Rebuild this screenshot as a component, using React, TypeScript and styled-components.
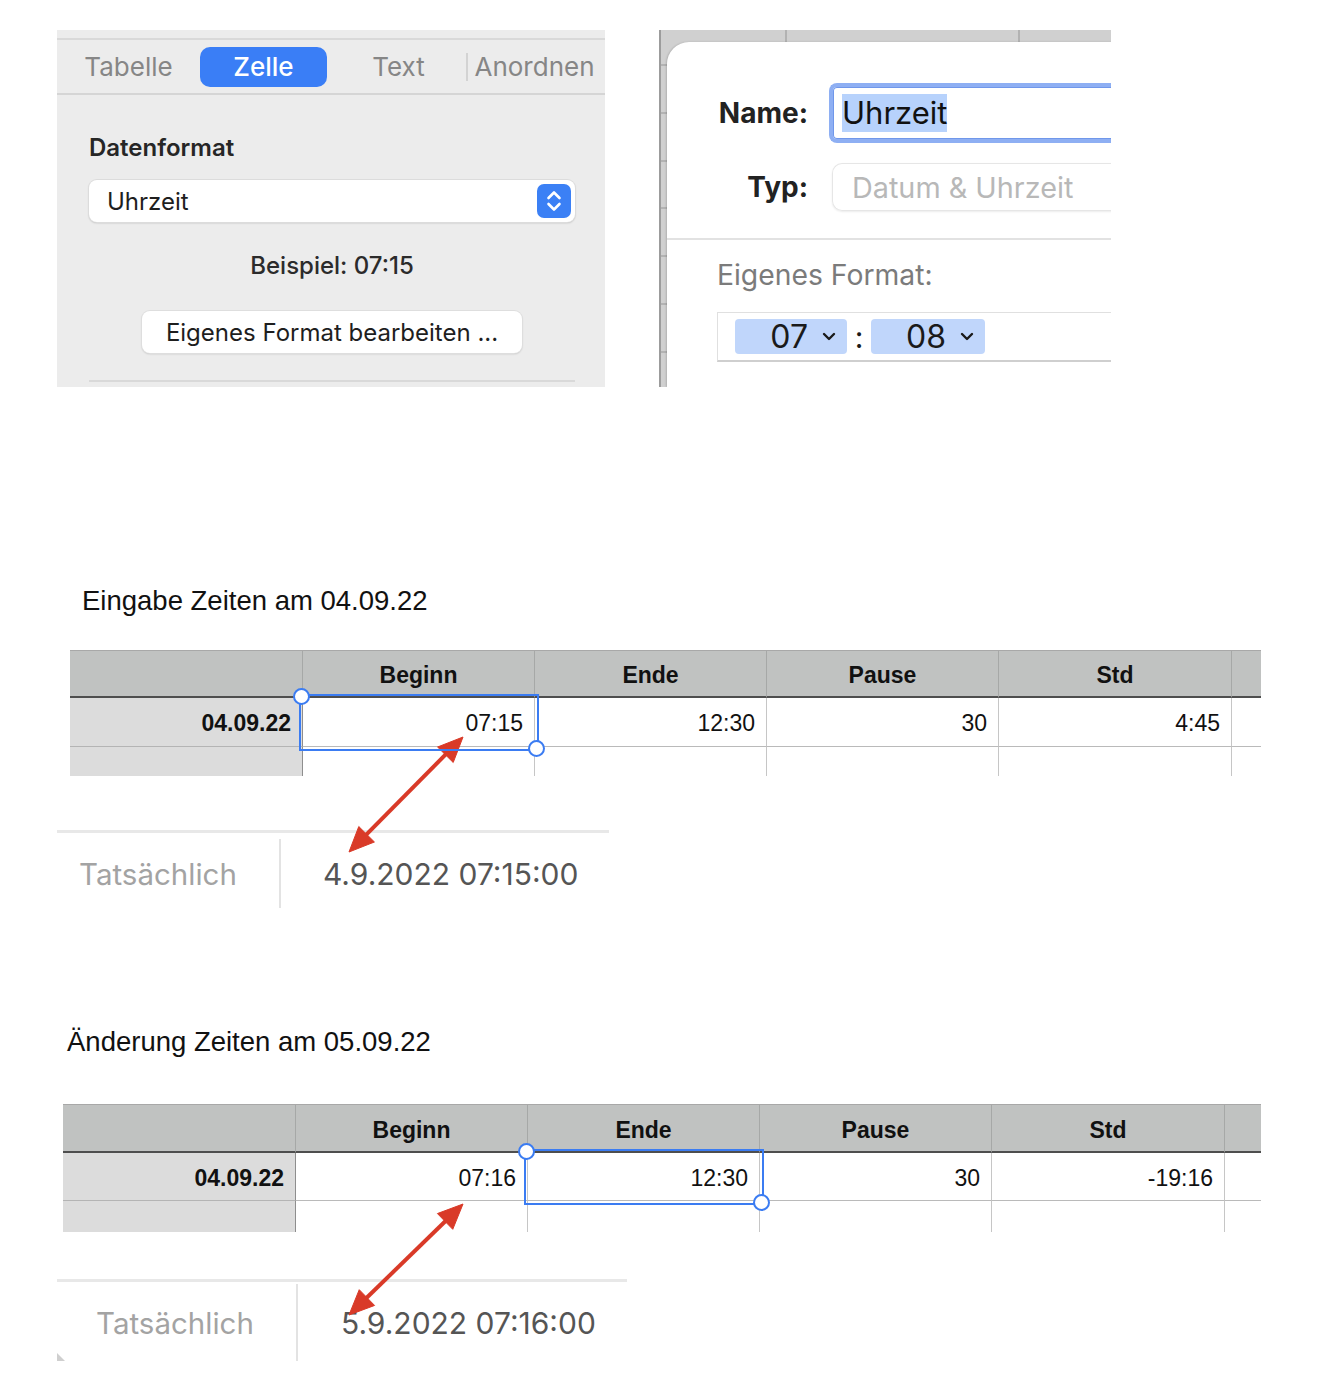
import React from 'react'
import styled, { createGlobalStyle } from 'styled-components';

const GlobalStyle = createGlobalStyle`
  * { box-sizing: border-box; }
  body {
    margin: 0;
    background: #fff;
    font-family: Inter, "Liberation Sans", sans-serif;
  }
`

const Page = styled.div`
  position: relative;
  width: 1338px;
  min-height: 1398px;
  background: #fff;
  display: flex;
  flex-direction: column;
`

const TopRow = styled.div`
  display: flex;
  gap: 54px;
  padding: 30px 0 0 57px;
`

/* ---------- inspector (left panel) ---------- */

const Inspector = styled.div`
  width: 548px;
  height: 357px;
  background: #ececec;
  display: flex;
  flex-direction: column;
`

const TabBar = styled.div`
  margin-top: 8px;
  height: 57px;
  border-top: 2px solid #d9d9d9;
  border-bottom: 2px solid #d5d5d5;
  padding: 0 4px;
  display: grid;
  grid-template-columns: repeat(4, 1fr);
  align-items: center;
`

const Tab = styled.div<{ $active?: boolean; $sep?: boolean }>`
  height: ${p => p.$sep ? '28px' : '40px'};
  margin: ${p => p.$sep ? '0' : '0 4px'};
  display: flex;
  align-items: center;
  justify-content: center;
  border-radius: 10px;
  font-size: 26px;
  font-weight: ${p => p.$active ? 500 : 400};
  color: ${p => p.$active ? '#fff' : '#868686'};
  background: ${p => p.$active ? '#3a7ef6' : 'transparent'};
  border-left: ${p => p.$sep ? '2px solid #d3d3d3' : 'none'};
  ${p => p.$sep && 'border-radius: 0;'}
`

const InspectorBody = styled.div`
  padding: 0 30px 0 32px;
  display: flex;
  flex-direction: column;
`

const SectionLabel = styled.div`
  margin-top: 39px;
  font-size: 24px;
  line-height: 28px;
  font-weight: 600;
  color: #262626;
`

const Select = styled.div`
  margin-top: 18px;
  height: 42px;
  background: #fff;
  border-radius: 8px;
  box-shadow: 0 0 0 1px #dcdcdc, 0 1px 2px rgba(0, 0, 0, 0.25);
  display: flex;
  align-items: center;
  justify-content: space-between;
  padding: 0 4px 0 18px;
  font-size: 24px;
  color: #1e1e1e;
`

const Example = styled.div`
  margin-top: 30px;
  text-align: center;
  font-size: 24px;
  line-height: 28px;
  font-weight: 500;
  color: #2b2b2b;
`

const PushButton = styled.div`
  margin-top: 31px;
  align-self: center;
  width: 380px;
  height: 42px;
  background: #fff;
  border-radius: 8px;
  box-shadow: 0 0 0 1px #dedede, 0 1px 2px rgba(0, 0, 0, 0.22);
  display: flex;
  align-items: center;
  justify-content: center;
  font-size: 24px;
  color: #1e1e1e;
`

const Rule = styled.div`
  margin-top: 27px;
  height: 2px;
  background: #d9d9d9;
`

/* ---------- custom format sheet (right panel) ---------- */

const SheetFrame = styled.div`
  width: 452px;
  height: 357px;
  overflow: hidden;
  display: flex;
  padding: 12px 0 0 6px;
  border-left: 2px solid #9c9c9c;
  background-color: #d0d0d0;
  background-image:
    linear-gradient(to right, transparent 124px, #b2b2b2 124px, #b2b2b2 126px, transparent 126px,
      transparent 357px, #b2b2b2 357px, #b2b2b2 359px, transparent 359px),
    repeating-linear-gradient(to bottom, transparent 0, transparent 34px, #b3b3b3 34px, #b3b3b3 36px, transparent 36px, transparent 47.8px);
`

const Sheet = styled.div`
  flex: 1;
  min-width: 460px;
  background: #fff;
  border-top-left-radius: 22px;
  box-shadow: -1px 0 2px rgba(0, 0, 0, 0.15);
  display: flex;
  flex-direction: column;
`

const FieldGrid = styled.div`
  display: grid;
  grid-template-columns: 141px 1fr;
  grid-template-rows: 60px 48px;
  column-gap: 21px;
  row-gap: 20px;
  padding-top: 41px;
  align-items: center;
`

const FieldLabel = styled.div`
  text-align: right;
  font-size: 28px;
  font-weight: 700;
  color: #222;
`

const NameInput = styled.div`
  height: 60px;
  border: 4px solid #8eaff3;
  border-right: none;
  border-radius: 8px 0 0 8px;
  box-shadow: inset 0 0 0 1px #7097ea;
  display: flex;
  align-items: center;
  padding-left: 9px;
`

const Highlight = styled.span`
  background: #b7d2fc;
  font-size: 31px;
  line-height: 38px;
  color: #111;
`

const TypeField = styled.div`
  margin-left: 3px;
  height: 48px;
  border: 1px solid #e6e6e6;
  border-right: none;
  border-radius: 10px 0 0 10px;
  box-shadow: 0 1px 2px rgba(0, 0, 0, 0.08);
  display: flex;
  align-items: center;
  padding-left: 19px;
  font-size: 28.8px;
  color: #b8b8b8;
`

const SheetDivider = styled.div`
  margin-top: 27px;
  height: 2px;
  background: #e2e2e2;
`

const FormatLabel = styled.div`
  margin: 19px 0 0 50px;
  font-size: 28.3px;
  line-height: 32px;
  color: #7b7b7b;
`

const FormatBox = styled.div`
  margin: 21px 0 0 50px;
  height: 50px;
  border: 1px solid #e0e0e0;
  border-bottom: 2px solid #cfcfcf;
  border-right: none;
  display: flex;
  align-items: center;
  padding-left: 17px;
`

const Token = styled.div<{ $w: number }>`
  width: ${p => p.$w}px;
  height: 35px;
  background: #c0d6fb;
  border-radius: 4px;
  display: flex;
  align-items: center;
  justify-content: flex-end;
  gap: 14px;
  padding-right: 11px;
  font-size: 32px;
  color: #1a1a1a;
`

const Colon = styled.div`
  width: 24px;
  text-align: center;
  font-size: 30px;
  color: #1a1a1a;
`

/* ---------- spreadsheet parts ---------- */

const Title = styled.div<{ $x: number; $top: number }>`
  margin: ${p => p.$top}px 0 0 ${p => p.$x}px;
  font-family: "Liberation Sans", Arial, sans-serif;
  font-size: 27.5px;
  line-height: 30px;
  color: #111;
`

const Grid = styled.div<{ $x: number; $top: number; $w: number; $rows: string }>`
  margin: ${p => p.$top}px 0 0 ${p => p.$x}px;
  width: ${p => p.$w}px;
  display: grid;
  grid-template-columns: 233px 232px 232px 232px 233px 1fr;
  grid-template-rows: ${p => p.$rows};
  border-top: 1px solid #a8a8a8;
  font-family: "Liberation Sans", Arial, sans-serif;
  font-size: 23px;
  color: #111;
`

const HeadCell = styled.div<{ $last?: boolean }>`
  background: #c0c2c1;
  border-right: ${p => p.$last ? 'none' : '1px solid #a6a8a7'};
  border-bottom: 2px solid #4e4e4e;
  display: flex;
  align-items: center;
  justify-content: center;
  padding-top: 4px;
  font-weight: 700;
`

const RowHead = styled.div<{ $open?: boolean }>`
  background: #dcdcdc;
  border-right: 1px solid #8e8e8e;
  border-bottom: ${p => p.$open ? 'none' : '1px solid #b4b4b4'};
  display: flex;
  align-items: center;
  justify-content: flex-end;
  padding: 3px 11px 0 0;
  font-weight: 700;
`

const Cell = styled.div<{ $open?: boolean; $last?: boolean }>`
  position: relative;
  background: #fff;
  border-right: ${p => p.$last ? 'none' : '1px solid #c6c6c6'};
  border-bottom: ${p => p.$open ? 'none' : '1px solid #bababa'};
  display: flex;
  align-items: center;
  justify-content: flex-end;
  padding: 3px 11px 0 0;
`

const Selection = styled.div`
  position: absolute;
  inset: -4px -5px -5px -4px;
  border: 2px solid #3b7cf2;
  z-index: 2;
  pointer-events: none;

  &::before, &::after {
    content: '';
    position: absolute;
    width: 13px;
    height: 13px;
    border-radius: 50%;
    background: #fff;
    border: 2px solid #3b7cf2;
  }
  &::before { top: -8px; left: -8px; }
  &::after { bottom: -8px; right: -8px; }
`

const Actual = styled.div<{ $top: number; $w: number; $h: number; $label: number; $shift: number; $corner?: boolean }>`
  position: relative;
  margin: ${p => p.$top}px 0 0 57px;
  width: ${p => p.$w}px;
  height: ${p => p.$h}px;
  border-top: 3px solid #e8e8e8;
  display: grid;
  grid-template-columns: ${p => p.$label}px 1fr;
  padding-top: ${p => p.$shift}px;

  ${p => p.$corner && `
    &::after {
      content: '';
      position: absolute;
      left: 0;
      bottom: 0;
      border-left: 8px solid #cfcfcf;
      border-top: 8px solid transparent;
    }
  `}
`

const ActualLabel = styled.div<{ $pad: number }>`
  border-right: 2px solid #e3e3e3;
  padding-left: ${p => p.$pad}px;
  display: flex;
  align-items: center;
  font-size: 29.5px;
  color: #a3a3a3;
`

const ActualValue = styled.div<{ $pad: number }>`
  padding-left: ${p => p.$pad}px;
  display: flex;
  align-items: center;
  font-size: 30px;
  color: #555;
`

const Overlay = styled.svg`
  position: absolute;
  left: 0;
  top: 0;
  pointer-events: none;
`

function Stepper() {
  return (
    <svg width="34" height="34" viewBox="0 0 34 34">
      <rect width="34" height="34" rx="7" fill="#3b80f5" />
      <path d="M11.5 14 L17 8.5 L22.5 14" stroke="#fff" strokeWidth="2.6" fill="none" strokeLinecap="round" strokeLinejoin="round" />
      <path d="M11.5 20 L17 25.5 L22.5 20" stroke="#fff" strokeWidth="2.6" fill="none" strokeLinecap="round" strokeLinejoin="round" />
    </svg>
  )
}

function Chevron() {
  return (
    <svg width="14" height="9" viewBox="0 0 14 9">
      <path d="M2 2 L7 7 L12 2" stroke="#1a1a1a" strokeWidth="2.4" fill="none" strokeLinecap="round" strokeLinejoin="round" />
    </svg>
  )
}

// double-headed arrow, tips at (x1,y1) and (x2,y2)
function Arrow({ x1, y1, x2, y2 }: { x1: number, y1: number, x2: number, y2: number }) {
  const len = Math.hypot(x2 - x1, y2 - y1);
  const ux = (x2 - x1) / len, uy = (y2 - y1) / len;
  const nx = -uy, ny = ux;
  const head = 25, half = 11;
  const head1 = [
    [x1, y1],
    [x1 + ux * head + nx * half, y1 + uy * head + ny * half],
    [x1 + ux * head - nx * half, y1 + uy * head - ny * half],
  ];
  const head2 = [
    [x2, y2],
    [x2 - ux * head + nx * half, y2 - uy * head + ny * half],
    [x2 - ux * head - nx * half, y2 - uy * head - ny * half],
  ];
  return (
    <g fill="#d93a28" stroke="#d93a28">
      <line x1={x1 + ux * 20} y1={y1 + uy * 20} x2={x2 - ux * 20} y2={y2 - uy * 20} strokeWidth="4" />
      <polygon points={head1.map(p => p.join(',')).join(' ')} strokeWidth="1" />
      <polygon points={head2.map(p => p.join(',')).join(' ')} strokeWidth="1" />
    </g>
  )
}

interface SheetRow {
  date: string,
  values: string[],
}

interface TimeTableProps {
  x: number,
  top: number,
  width: number,
  rows: string,
  row: SheetRow,
  selected: number,
}

const headers = ['Beginn', 'Ende', 'Pause', 'Std'];

function TimeTable({ x, top, width, rows, row, selected }: TimeTableProps) {
  return (
    <Grid $x={x} $top={top} $w={width} $rows={rows}>
      <HeadCell />
      {headers.map(h => <HeadCell key={h}>{h}</HeadCell>)}
      <HeadCell $last />

      <RowHead>{row.date}</RowHead>
      {row.values.map((v, i) => (
        <Cell key={i}>
          {v}
          {i === selected && <Selection />}
        </Cell>
      ))}
      <Cell $last />

      <RowHead $open />
      {row.values.map((_, i) => <Cell key={i} $open />)}
      <Cell $open $last />
    </Grid>
  )
}

function App() {
  return (
    <Page>
      <GlobalStyle />
      <TopRow>
        <Inspector>
          <TabBar>
            <Tab>Tabelle</Tab>
            <Tab $active>Zelle</Tab>
            <Tab>Text</Tab>
            <Tab $sep>Anordnen</Tab>
          </TabBar>
          <InspectorBody>
            <SectionLabel>Datenformat</SectionLabel>
            <Select>
              Uhrzeit
              <Stepper />
            </Select>
            <Example>Beispiel: 07:15</Example>
            <PushButton>Eigenes Format bearbeiten ...</PushButton>
            <Rule />
          </InspectorBody>
        </Inspector>

        <SheetFrame>
          <Sheet>
            <FieldGrid>
              <FieldLabel>Name:</FieldLabel>
              <NameInput><Highlight>Uhrzeit</Highlight></NameInput>
              <FieldLabel>Typ:</FieldLabel>
              <TypeField>Datum &amp; Uhrzeit</TypeField>
            </FieldGrid>
            <SheetDivider />
            <FormatLabel>Eigenes Format:</FormatLabel>
            <FormatBox>
              <Token $w={112}>07 <Chevron /></Token>
              <Colon>:</Colon>
              <Token $w={114}>08 <Chevron /></Token>
            </FormatBox>
          </Sheet>
        </SheetFrame>
      </TopRow>

      <Title $x={82} $top={199}>Eingabe Zeiten am 04.09.22</Title>
      <TimeTable
        x={70} top={34} width={1191} rows="47px 49px 29px"
        row={{ date: '04.09.22', values: ['07:15', '12:30', '30', '4:45'] }}
        selected={0}
      />
      <Actual $top={54} $w={552} $h={78} $label={224} $shift={6}>
        <ActualLabel $pad={22}>Tatsächlich</ActualLabel>
        <ActualValue $pad={42}>4.9.2022 07:15:00</ActualValue>
      </Actual>

      <Title $x={67} $top={119}>Änderung Zeiten am 05.09.22</Title>
      <TimeTable
        x={63} top={47} width={1198} rows="48px 48px 31px"
        row={{ date: '04.09.22', values: ['07:16', '12:30', '30', '-19:16'] }}
        selected={1}
      />
      <Actual $top={47} $w={570} $h={82} $label={241} $shift={2} $corner>
        <ActualLabel $pad={39}>Tatsächlich</ActualLabel>
        <ActualValue $pad={43}>5.9.2022 07:16:00</ActualValue>
      </Actual>

      <Overlay width="1338" height="1398" viewBox="0 0 1338 1398">
        <Arrow x1={463} y1={737} x2={349} y2={852} />
        <Arrow x1={463} y1={1204} x2={349} y2={1315} />
      </Overlay>
    </Page>
  )
}

export default App;
